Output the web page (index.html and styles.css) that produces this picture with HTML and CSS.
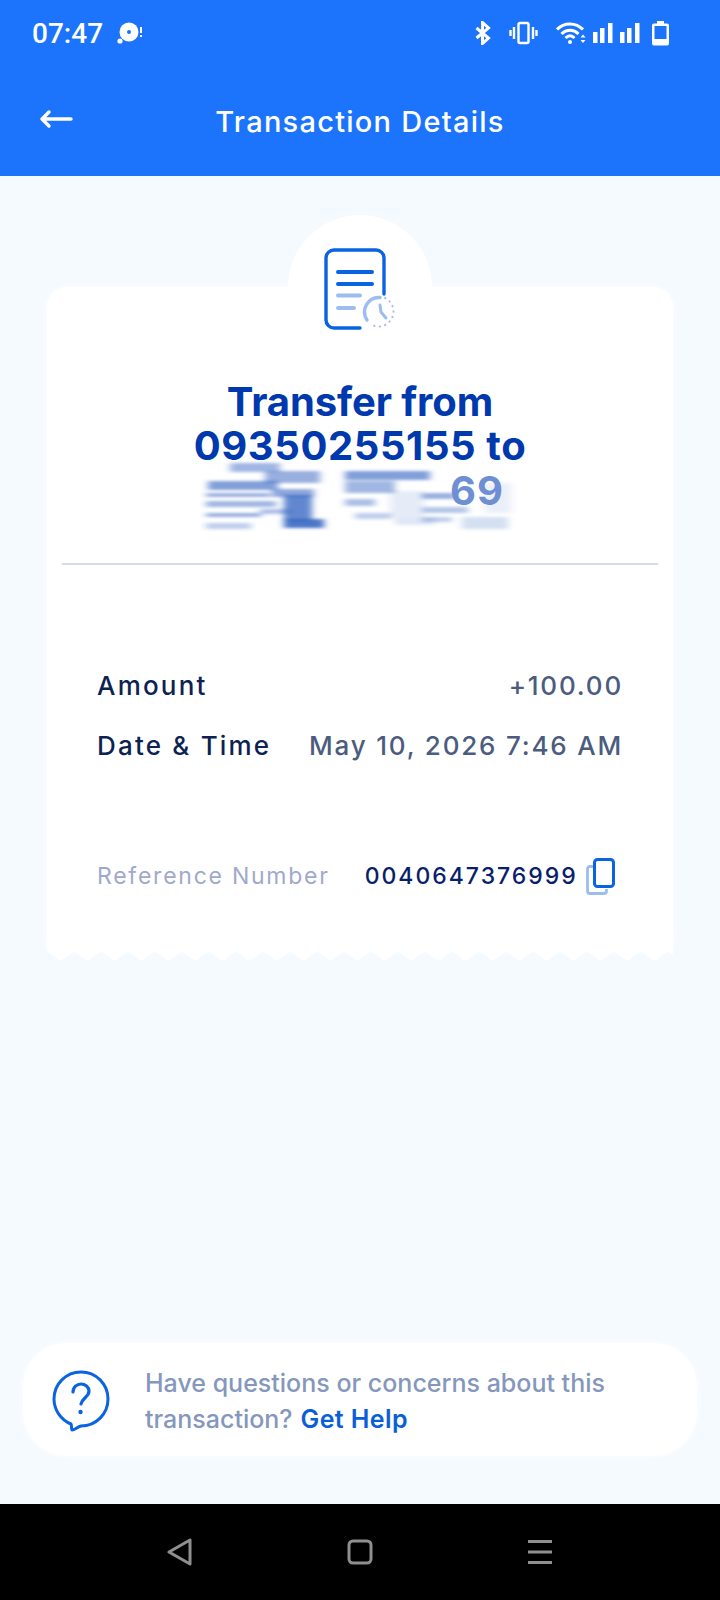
FILE: index.html
```html
<!DOCTYPE html>
<html lang="en">
<head>
    <meta charset="UTF-8">
    <meta name="viewport" content="width=device-width, initial-scale=1.0">
    <title>Transaction Details</title>
    <link rel="stylesheet" href="styles.css">
</head>
<body>
    <header class="app-header">
        <div class="status-bar">
            <div class="status-left">
                <span class="clock">07:47</span>
                <svg class="disc-icon" width="26" height="24" viewBox="0 0 26 24">
                    <circle cx="12" cy="11" r="9.500" fill="#fff"/>
                    <circle cx="12" cy="11" r="2" fill="#1b74fb"/>
                    <circle cx="3" cy="20" r="2.600" fill="#fff"/>
                    <rect x="23" y="6" width="2" height="6" fill="#fff"/>
                    <rect x="23" y="14" width="2" height="2" fill="#fff"/>
                </svg>
            </div>
            <div class="status-right">
                <svg class="bt-icon" width="16" height="24" viewBox="0 0 16 24" fill="none" stroke="#fff" stroke-width="3">
                    <path d="M1.500 7l12 10-6 5.500V1.500l6 5.500-12 10"/>
                </svg>
                <svg class="vib-icon" width="29" height="24" viewBox="0 0 29 24" fill="none" stroke="#fff">
                    <rect x="9.500" y="2" width="10" height="20" rx="1.500" stroke-width="2.400"/>
                    <path d="M5 6v12M1.500 9v6M24 6v12M27.500 9v6" stroke-width="2.400"/>
                </svg>
                <svg class="wifi-icon" width="30" height="24" viewBox="0 0 30 24" fill="none" stroke="#fff" stroke-width="3">
                    <path d="M1 8.500C8 1 20 1 27 8.500"/>
                    <path d="M5.500 13c5-5 12-5 17 0"/>
                    <path d="M9.500 17c3-3 6-3 9 0"/>
                    <circle cx="14" cy="21" r="2" fill="#fff" stroke="none"/>
                    <path d="M24.500 16.500l2.500-3 2.500 3zM24.500 19l2.500 3 2.500-3z" fill="#fff" stroke="none"/>
                </svg>
                <svg class="signal-icon" width="48" height="22" viewBox="0 0 48 22" fill="#fff">
                    <rect x="0" y="10" width="4.500" height="11"/>
                    <rect x="7" y="6" width="4.500" height="15"/>
                    <rect x="15" y="1" width="4.500" height="20"/>
                    <rect x="27" y="10" width="4.500" height="11"/>
                    <rect x="34" y="6" width="4.500" height="15"/>
                    <rect x="42" y="1" width="4.500" height="20"/>
                </svg>
                <svg class="battery-icon" width="17" height="26" viewBox="0 0 17 26">
                    <path d="M5 1h7v2.500h3a2 2 0 0 1 2 2V23.500a2 2 0 0 1-2 2H2a2 2 0 0 1-2-2V5.500a2 2 0 0 1 2-2h3z" fill="#fff"/>
                    <rect x="2.500" y="6" width="12" height="13" fill="#1b74fb"/>
                </svg>
            </div>
        </div>
        <div class="title-bar">
            <svg class="back-icon" width="34" height="20" viewBox="0 0 34 20" fill="none" stroke="#fff" stroke-width="3.400" stroke-linecap="round" stroke-linejoin="round">
                <path d="M32 10H3M10 3l-7 7 7 7"/>
            </svg>
            <h1>Transaction Details</h1>
        </div>
    </header>

    <main class="content">
        <section class="receipt">
            <svg class="doc-icon" width="72" height="84" viewBox="0 0 72 84" fill="none" stroke-linecap="round">
                <path d="M60 46V10a8 8 0 0 0-8-8H10a8 8 0 0 0-8 8v62a8 8 0 0 0 8 8h26" stroke="#0a63e0" stroke-width="3.400"/>
                <path d="M14 24h34M14 36h34" stroke="#0a63e0" stroke-width="4"/>
                <path d="M14 47.500h22M14 60h16" stroke="#9dbdf0" stroke-width="4"/>
                <path d="M43 72a14.500 14.500 0 0 1 13-22.500" stroke="#9dbdf0" stroke-width="3.400"/>
                <path d="M56 57l1 7 5 6" stroke="#9dbdf0" stroke-width="3"/>
                <path d="M61 50a14.500 14.500 0 0 1-13 27" stroke="#aebcdf" stroke-width="2" stroke-dasharray="0.500 5"/>
            </svg>
            <h2 class="receipt-title">
                <span class="title-line">Transfer from</span>
                <span class="title-line title-number">09350255155 to</span>
            </h2>
            <div class="redacted">
                <svg width="320" height="72" viewBox="0 0 320 72">
                    <defs>
                        <filter id="smear" x="-10%" y="-50%" width="120%" height="200%">
                            <feGaussianBlur stdDeviation="3.500 1.800"/>
                        </filter>
                    </defs>
                    <g filter="url(#smear)" fill="#2f5fc0">
                        <rect x="8" y="20" width="70" height="9" opacity=".6"/>
                        <rect x="30" y="2" width="50" height="9" opacity=".45"/>
                        <rect x="65" y="10" width="55" height="12" opacity=".5"/>
                        <rect x="6" y="32" width="64" height="4" opacity=".5"/>
                        <rect x="6" y="40" width="70" height="6" opacity=".45"/>
                        <rect x="6" y="52" width="55" height="4" opacity=".5"/>
                        <rect x="6" y="62" width="45" height="6" opacity=".3"/>
                        <rect x="72" y="28" width="42" height="8" opacity=".55"/>
                        <rect x="84" y="34" width="28" height="26" opacity=".75"/>
                        <rect x="84" y="58" width="40" height="9" opacity=".85"/>
                        <rect x="60" y="48" width="30" height="5" opacity=".4"/>
                        <rect x="145" y="10" width="85" height="9" opacity=".6"/>
                        <rect x="145" y="20" width="50" height="12" opacity=".45"/>
                        <rect x="145" y="38" width="30" height="7" opacity=".4"/>
                        <rect x="155" y="52" width="36" height="6" opacity=".3"/>
                        <rect x="190" y="30" width="34" height="26" opacity=".12"/>
                        <rect x="195" y="56" width="40" height="8" opacity=".15"/>
                        <rect x="222" y="32" width="34" height="6" opacity=".5"/>
                        <rect x="222" y="46" width="46" height="6" opacity=".35"/>
                        <rect x="222" y="56" width="30" height="5" opacity=".3"/>
                        <rect x="262" y="56" width="46" height="12" opacity=".2"/>
                        <rect x="285" y="22" width="26" height="30" opacity=".1"/>
                    </g>
                </svg>
                <span class="redacted-tail">69</span>
            </div>
            <hr class="divider">
            <div class="rows">
                <div class="row row-amount">
                    <span class="row-label">Amount</span>
                    <span class="row-value">+100.00</span>
                </div>
                <div class="row">
                    <span class="row-label">Date &amp; Time</span>
                    <span class="row-value">May 10, 2026 7:46 AM</span>
                </div>
            </div>
            <div class="reference">
                <span class="reference-label">Reference Number</span>
                <span class="reference-value">0040647376999</span>
                <svg class="copy-icon" width="30" height="38" viewBox="0 0 30 38" fill="none" stroke-width="2.800">
                    <path d="M8.500 8.500H4a2.500 2.500 0 0 0-2.500 2.500v22A2.500 2.500 0 0 0 4 35.500h14a2.500 2.500 0 0 0 2.500-2.500v-2" stroke="#9dbdf0"/>
                    <rect x="8.500" y="1.500" width="19" height="27" rx="3" stroke="#0a63e0" stroke-width="3"/>
                </svg>
            </div>
            <div class="receipt-edge"></div>
        </section>

        <section class="help-card">
            <svg class="help-icon" width="58" height="62" viewBox="0 0 58 62" fill="none" stroke="#0a63e0" stroke-width="3" stroke-linecap="round" stroke-linejoin="round">
                <path d="M29 2C14 2 2 14 2 29c0 11 7 21 17 25 1 2 0 4 1 6 3 0 5-3 9-4 15 0 27-12 27-27S44 2 29 2z"/>
                <path d="M21 22c0-5 4-8 8-8s8 3 8 7c0 6-7 7-8 13" stroke-width="3.200"/>
                <circle cx="28.500" cy="42" r="2.200" fill="#0a63e0" stroke="none"/>
            </svg>
            <div class="help-text">
                <div>Have questions or concerns about this</div>
                <div class="help-line">
                    <span>transaction?</span>
                    <a href="#">Get Help</a>
                </div>
            </div>
        </section>
    </main>

    <nav class="nav-bar">
        <svg width="26" height="28" viewBox="0 0 26 28" fill="none" stroke="#8f8f8f" stroke-width="3" stroke-linejoin="round">
            <path d="M23 2v24L2 14z"/>
        </svg>
        <svg width="26" height="26" viewBox="0 0 26 26" fill="none" stroke="#8f8f8f" stroke-width="3">
            <rect x="2" y="2" width="22" height="22" rx="4"/>
        </svg>
        <svg width="26" height="24" viewBox="0 0 26 24" fill="#8f8f8f">
            <rect x="1" y="0" width="24" height="3"/>
            <rect x="1" y="10.500" width="24" height="3"/>
            <rect x="1" y="21" width="24" height="3"/>
        </svg>
    </nav>
</body>
</html>
```

FILE: styles.css
```css
* {
    box-sizing: border-box;
}
body {
    font-family: Inter, Lato, Arial, sans-serif;
    margin: 0;
    width: 720px;
    height: 1600px;
    display: flex;
    flex-direction: column;
    background-color: #f5faff;
    overflow: hidden;
}
.app-header {
    height: 176px;
    background-color: #1b74fb;
    color: #fff;
}
.status-bar {
    height: 66px;
    display: flex;
    justify-content: space-between;
    align-items: center;
    padding: 0 51px 0 32px;
}
.status-left {
    display: flex;
    align-items: center;
    gap: 14px;
}
.clock {
    font-family: Roboto, sans-serif;
    font-size: 28px;
    font-weight: 500;
}
.status-right {
    display: flex;
    align-items: center;
}
.vib-icon {
    margin-left: 18px;
}
.wifi-icon {
    margin-left: 18px;
}
.signal-icon {
    margin-left: 7px;
}
.battery-icon {
    margin-left: 11px;
}
.title-bar {
    position: relative;
    height: 110px;
    display: flex;
    justify-content: center;
    align-items: center;
}
.title-bar h1 {
    margin: 0;
    font-size: 29px;
    font-weight: 500;
    letter-spacing: 1.25px;
}
.back-icon {
    position: absolute;
    left: 39px;
    top: 43px;
}
.content {
    flex: 1;
    display: flex;
    flex-direction: column;
    align-items: center;
}
.receipt {
    position: relative;
    width: 626px;
    height: 664px;
    margin-top: 111px;
    background-color: #fff;
    border-radius: 20px 20px 0 0;
    box-shadow: 0 0 8px rgba(255, 255, 255, 0.8);
    display: flex;
    flex-direction: column;
    align-items: center;
}
/* round bump behind the document icon */
.receipt::before {
    content: "";
    position: absolute;
    left: 241px;
    top: -72px;
    width: 144px;
    height: 144px;
    border-radius: 50%;
    background-color: #fff;
}
.doc-icon {
    position: relative;
    margin-top: -39px;
}
.receipt-title {
    margin: 48px 0 0;
    font-size: 40px;
    line-height: 44px;
    font-weight: 700;
    letter-spacing: -0.1px;
    text-align: center;
    color: #0038ad;
}
.title-line {
    display: block;
    height: 44px;
}
.title-number {
    letter-spacing: 0.6px;
}
.redacted {
    position: relative;
    width: 320px;
    height: 72px;
    margin-top: -7px;
}
.redacted-tail {
    position: absolute;
    left: 250px;
    top: 0;
    font-size: 40px;
    line-height: 60px;
    font-weight: 700;
    letter-spacing: 1px;
    color: #6f8fd4;
}
.divider {
    width: 596px;
    margin: 30px 0 0;
    border: 0;
    border-top: 2px solid #d2dcea;
}
.rows {
    width: 100%;
    padding: 0 50px;
    margin-top: 90px;
}
.row {
    display: flex;
    justify-content: space-between;
    align-items: center;
    height: 60px;
    font-size: 26px;
}
.row-label {
    font-weight: 500;
    letter-spacing: 2.2px;
    color: #0d2252;
}
.row-value {
    color: #4b5c7e;
    font-weight: 500;
    letter-spacing: 1.8px;
}
.reference {
    width: 100%;
    display: flex;
    align-items: center;
    padding: 0 50px;
    margin-top: 80px;
    font-size: 23px;
    letter-spacing: 1.75px;
}
.reference-label {
    color: #a0a9cc;
}
.reference-value {
    margin-left: 35px;
    color: #0a1f6b;
    font-weight: 500;
    letter-spacing: 2px;
}
.copy-icon {
    margin: 3px 0 0 8px;
}
/* zigzag at the tear-off bottom of the receipt */
.receipt-edge {
    position: absolute;
    left: 0;
    right: 0;
    bottom: -10px;
    height: 10px;
    background-image: conic-gradient(from -53.5deg at 50% 100%, #fff 107deg, transparent 0);
    background-size: 27px 10px;
    background-repeat: repeat-x;
}
.help-card {
    width: 674px;
    height: 113px;
    margin-top: auto;
    margin-bottom: 48px;
    padding-left: 29px;
    background-color: #fff;
    border-radius: 44px;
    box-shadow: 0 0 8px rgba(255, 255, 255, 0.8);
    display: flex;
    align-items: center;
}
.help-icon {
    flex: none;
    margin-top: 2px;
}
.help-text {
    margin: 2px 0 0 35px;
    font-size: 25px;
    line-height: 36px;
    font-weight: 500;
    color: #8497bd;
}
.help-line {
    display: flex;
    gap: 8px;
}
.help-line a {
    color: #0a5fd8;
    font-weight: 600;
    letter-spacing: 0.4px;
    text-decoration: none;
}
.nav-bar {
    height: 96px;
    background-color: #000;
    display: flex;
    justify-content: center;
    align-items: center;
    gap: 154px;
}
```
